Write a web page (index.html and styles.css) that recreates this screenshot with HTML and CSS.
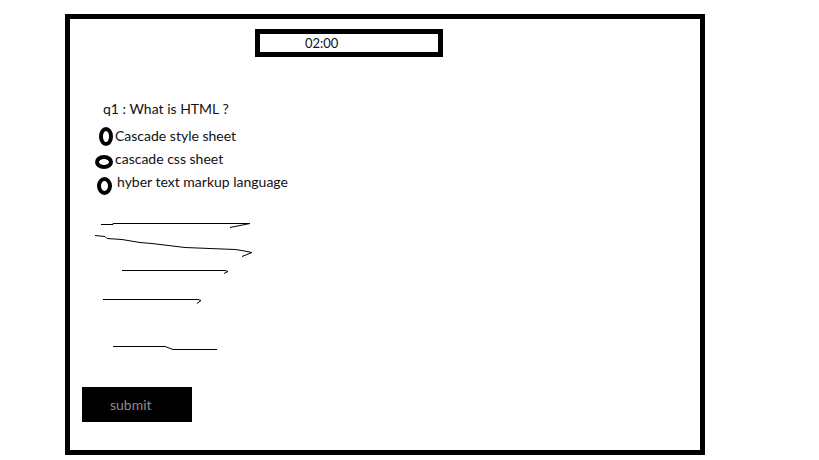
FILE: index.html
```html
<!DOCTYPE html>
<html lang="en">
<head>
  <meta charset="UTF-8">
  <title>Quiz</title>
  <link rel="stylesheet" href="styles.css">
</head>
<body>

<div class="frame">
  <div class="timer">02:00</div>

  <div class="question">q1 : What is HTML ?</div>

  <div class="option">
    <span class="oval oval-1"></span>
    <span class="label label-1">Cascade style sheet</span>
  </div>
  <div class="option">
    <span class="oval oval-2"></span>
    <span class="label label-2">cascade css sheet</span>
  </div>
  <div class="option">
    <span class="oval oval-3"></span>
    <span class="label label-3">hyber text markup language</span>
  </div>

  <!-- placeholder scribbles for more questions -->
  <svg class="scribbles" width="170" height="140" viewBox="0 0 170 140">
    <polyline points="11,9.5 23,9.5 23,8.5 160,8.5 140,12.5" />
    <polyline points="5,20.5 15,21.5 17,23.5 32,24.5 38,25.5 50,27.5 62,28.5 95,32.5 145,34.5 152,35.5 162,37.5 152,41.5" />
    <polyline points="32,55.5 135,55.5 138,56.5 134,58.5" />
    <polyline points="13,84.5 108,84.5 111,85.5 107,88.5" />
    <polyline points="23,131.5 75,131.5 83,134.5 127,134.5" />
  </svg>

  <button class="submit">submit</button>
</div>

</body>
</html>
```

FILE: styles.css
```css
body {
  margin: 0;
  background: #ffffff;
  font-family: Lato, "Open Sans", sans-serif;
  font-size: 14px;
  color: #111;
}
.frame {
  box-sizing: border-box;
  width: 640px;
  height: 441px;
  margin: 14px 0 0 65px;
  border: 5px solid #000;
}
.timer {
  box-sizing: border-box;
  width: 188px;
  height: 28px;
  margin: 10px 0 0 185px;
  padding-left: 45px;
  border: 5px solid #000;
  line-height: 18px;
  font-size: 13px;
}
.question {
  margin: 43px 0 9px 33px;
  line-height: 18px;
}
.option {
  display: flex;
  align-items: flex-start;
  height: 23px;
  padding-left: 25px;
  line-height: 18px;
}
.oval {
  box-sizing: border-box;
  border: 4px solid #000;
  border-radius: 50%;
}
.oval-1 {
  width: 14px;
  height: 19px;
  margin-left: 4px;
}
.oval-2 {
  width: 18px;
  height: 14px;
  margin-top: 5px;
}
.oval-3 {
  width: 15px;
  height: 18px;
  margin: 4px 0 0 2px;
}
.label-1,
.label-2 {
  margin-left: 2px;
}
.label-3 {
  margin-left: 5px;
}
.scribbles {
  display: block;
  margin: 19px 0 0 20px;
}
.scribbles polyline {
  fill: none;
  stroke: #000;
  stroke-width: 1;
}
.submit {
  display: block;
  width: 110px;
  height: 35px;
  margin: 32px 0 0 12px;
  padding: 0 0 0 28px;
  border: none;
  background: #000;
  color: #8c8c8c;
  font-family: Lato, "Open Sans", sans-serif;
  font-size: 14px;
  text-align: left;
}
```
